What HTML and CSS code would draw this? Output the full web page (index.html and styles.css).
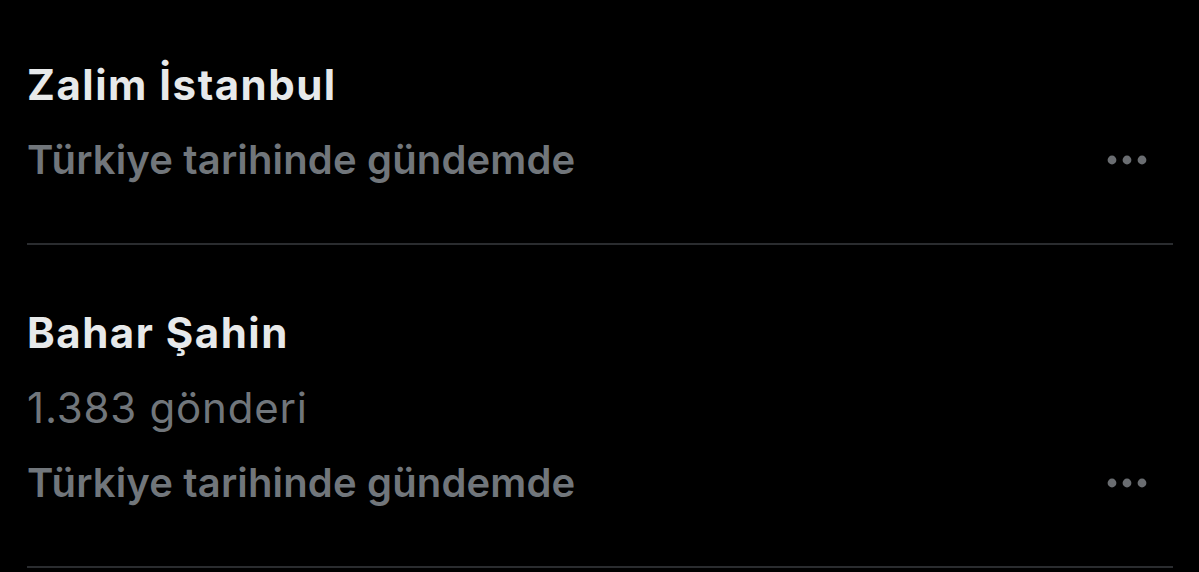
FILE: index.html
```html
<!DOCTYPE html>
<html lang="tr">
<head>
  <meta charset="UTF-8">
  <meta name="viewport" content="width=device-width, initial-scale=1">
  <title>Gündem</title>
  <link rel="stylesheet" href="styles.css">
</head>
<body>

  <div class="trend-list">
    <div class="trend-item">
      <div class="trend-title">Zalim İstanbul</div>
      <div class="trend-row">
        <div class="trend-context">Türkiye tarihinde gündemde</div>
        <button class="more-btn" aria-label="Diğer">
          <svg viewBox="0 0 40 10" width="40" height="10"><circle cx="5" cy="5" r="4.4"/><circle cx="20" cy="5" r="4.4"/><circle cx="35" cy="5" r="4.4"/></svg>
        </button>
      </div>
    </div>

    <div class="trend-item">
      <div class="trend-title">Bahar Şahin</div>
      <div class="trend-count">1.383 gönderi</div>
      <div class="trend-row">
        <div class="trend-context">Türkiye tarihinde gündemde</div>
        <button class="more-btn" aria-label="Diğer">
          <svg viewBox="0 0 40 10" width="40" height="10"><circle cx="5" cy="5" r="4.4"/><circle cx="20" cy="5" r="4.4"/><circle cx="35" cy="5" r="4.4"/></svg>
        </button>
      </div>
    </div>
  </div>

</body>
</html>
```

FILE: styles.css
```css
body {
  font-family: Inter, "Noto Sans", "Liberation Sans", sans-serif;
  background-color: #000;
  margin: 0;
  padding: 0;
  overflow: hidden;
}

.trend-list {
  margin-top: -3px;
}

.trend-item {
  margin: 0 26px 0 27px;
  padding: 50px 0 46px;
  border-bottom: 2px solid #2a2c2f;
}

.trend-title {
  color: #e7e9ea;
  font-size: 42px;
  font-weight: 700;
  letter-spacing: 1.5px;
  line-height: 75px;
}

.trend-count {
  color: #71767b;
  font-size: 42px;
  font-weight: 400;
  letter-spacing: 0.8px;
  line-height: 75px;
}

.trend-row {
  display: flex;
  align-items: center;
  justify-content: space-between;
}

.trend-context {
  color: #71767b;
  font-size: 40px;
  font-weight: 600;
  letter-spacing: 0.15px;
  line-height: 75px;
}

.more-btn {
  background: none;
  border: none;
  padding: 0;
  margin-right: 26px;
  display: flex;
  cursor: pointer;
}

.more-btn svg {
  fill: #6a6d71;
}
```
